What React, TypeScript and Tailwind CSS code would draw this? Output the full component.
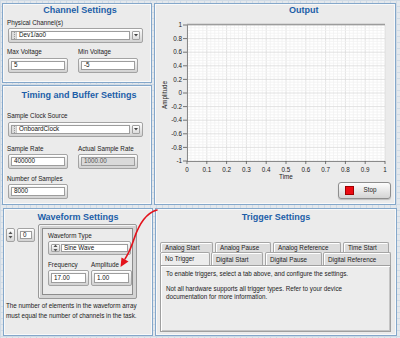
import React from 'react';

const frame =
  'rounded-[2px] border border-[#a3a3a3] bg-linear-to-b from-[#fbfbfb] to-[#d2d2d2] p-[2px] shadow-[inset_0_1px_0_#ffffff]';

const Panel: React.FC<{ className?: string; children?: React.ReactNode }> = ({ className = '', children }) => (
  <div className={`border border-[#84a7ca] bg-[#ebebeb] shadow-[inset_0_0_0_1px_#f9f9f9] ${className}`}>{children}</div>
);

const Title: React.FC<{ className?: string; children: React.ReactNode }> = ({ className = '', children }) => (
  <div className={`h-[13px] text-[9px] leading-[13px] font-bold whitespace-nowrap text-[#1c5ea8] ${className}`}>{children}</div>
);

const Label: React.FC<{ className?: string; children: React.ReactNode }> = ({ className = '', children }) => (
  <div className={`h-[8px] text-[6.3px] leading-[8px] whitespace-nowrap text-[#222] ${className}`}>{children}</div>
);

const NumBox: React.FC<{ value: string; className?: string; disabled?: boolean }> = ({ value, className = '', disabled }) => (
  <div className={`${frame} ${className}`}>
    <div
      className={`flex h-full items-center border border-[#9d9d9d] pl-[2px] text-[6.3px] leading-none ${
        disabled ? 'bg-[#d9d9d9] text-[#555]' : 'bg-white text-[#111]'
      }`}
    >
      {value}
    </div>
  </div>
);

const Incrementer: React.FC<{ className?: string }> = ({ className = '' }) => (
  <svg width="7" height="10" viewBox="0 0 7 10" className={className}>
    <polygon points="1.5,4 3.5,1.5 5.5,4" fill="#555" />
    <polygon points="1.5,6 3.5,8.5 5.5,6" fill="#555" />
  </svg>
);

const Combo: React.FC<{ value: string; className?: string }> = ({ value, className = '' }) => (
  <div className={`${frame} flex h-[15px] items-stretch gap-[2px] ${className}`}>
    <div className="flex flex-1 items-stretch border border-[#9d9d9d] bg-white">
      <div className="w-[5px] border-r border-[#c9c9c9] bg-[#dcdcdc] bg-[image:repeating-linear-gradient(to_bottom,#9a9a9a_0px,#9a9a9a_1px,transparent_1px,transparent_2px)] bg-size-[1px_100%] bg-center bg-no-repeat" />
      <div className="flex items-center pl-[2px] text-[6.3px] leading-none text-[#111]">{value}</div>
    </div>
    <div className="flex w-[8px] items-center justify-center rounded-[1px] border border-[#a0a0a0] bg-linear-to-b from-white to-[#dcdcdc]">
      <svg width="4" height="3" viewBox="0 0 4 3">
        <polygon points="0,0 4,0 2,2.5" fill="#444" />
      </svg>
    </div>
  </div>
);

const Chart: React.FC = () => {
  const X0 = 32;
  const Y0 = 7;
  const W = 198;
  const H = 136;
  const yLabels = ['1', '0.8', '0.6', '0.4', '0.2', '0', '-0.2', '-0.4', '-0.6', '-0.8', '-1'];
  const xLabels = ['0', '0.1', '0.2', '0.3', '0.4', '0.5', '0.6', '0.7', '0.8', '0.9', '1'];
  const minor = Array.from({ length: 51 }, (_, i) => i);
  return (
    <svg width="238" height="162" viewBox="0 0 238 162" className="mt-[1px] block">
      <rect x={X0} y={Y0} width={W} height={H} fill="#ffffff" />
      {minor.map((i) => (
        <line
          key={'vx' + i}
          x1={X0 + (i * W) / 50}
          x2={X0 + (i * W) / 50}
          y1={Y0}
          y2={Y0 + H}
          stroke={i % 5 === 0 ? '#dadada' : '#f1f1f1'}
          strokeWidth="0.8"
        />
      ))}
      {minor.map((i) => (
        <line
          key={'hy' + i}
          x1={X0}
          x2={X0 + W}
          y1={Y0 + (i * H) / 50}
          y2={Y0 + (i * H) / 50}
          stroke={i % 5 === 0 ? '#dadada' : '#f1f1f1'}
          strokeWidth="0.8"
        />
      ))}
      <line x1={X0} x2={X0 + W} y1={Y0 - 0.5} y2={Y0 - 0.5} stroke="#9c9c9c" strokeWidth="1.6" />
      <line x1={X0 + 0.5} x2={X0 + 0.5} y1={Y0} y2={Y0 + H} stroke="#8a8a8a" strokeWidth="1" />
      <line x1={X0} x2={X0 + W} y1={Y0 + H + 0.5} y2={Y0 + H + 0.5} stroke="#8a8a8a" strokeWidth="1" />
      {yLabels.map((t, i) => {
        const y = Y0 + (i * H) / 10;
        return (
          <g key={'yl' + t}>
            <line x1={X0 - 4} x2={X0} y1={y} y2={y} stroke="#555" strokeWidth="0.8" />
            <text x={X0 - 5} y={y + 2.2} textAnchor="end" fontSize="6.3" fill="#222">
              {t}
            </text>
          </g>
        );
      })}
      {xLabels.map((t, i) => {
        const x = X0 + (i * W) / 10;
        return (
          <g key={'xl' + t}>
            <line x1={x} x2={x} y1={Y0 + H} y2={Y0 + H + 3} stroke="#555" strokeWidth="0.8" />
            <text x={x} y={Y0 + H + 11} textAnchor="middle" fontSize="6.3" fill="#222">
              {t}
            </text>
          </g>
        );
      })}
      <text x="131" y="161" textAnchor="middle" fontSize="6.3" fill="#222">
        Time
      </text>
      <text x="12" y="77" textAnchor="middle" fontSize="6.3" fill="#222" transform="rotate(-90 12 77)">
        Amplitude
      </text>
    </svg>
  );
};

const Tab: React.FC<{ label: string; w: string; selected?: boolean; className?: string }> = ({ label, w, selected, className = '' }) => (
  <div
    className={`${w} flex h-full items-start rounded-t-[2px] border border-b-0 border-[#a6a6a6] pt-[1px] pl-[4px] text-[6.3px] leading-[8px] whitespace-nowrap text-[#222] shadow-[inset_1px_1px_0_#ffffff] ${
      selected ? 'relative z-10 -mb-[1px] bg-[#ececec] pl-[3px]' : 'bg-[#dcdcdc]'
    } ${className}`}
  >
    {label}
  </div>
);

export default function App() {
  return (
    <div className="relative h-[338px] w-[400px] overflow-hidden bg-[#e4e8ec] bg-[image:linear-gradient(to_right,#cfdae5_1px,transparent_1px),linear-gradient(to_bottom,#cfdae5_1px,transparent_1px)] bg-size-[6px_6px] font-['Liberation_Sans',Arial,sans-serif]">
      <div className="flex gap-[2px] pt-[3px] pl-[2px]">
        <div className="flex w-[150px] flex-col gap-[2px]">
          {/* Channel Settings */}
          <Panel className="h-[80px]">
            <div className="flex flex-col pl-[4px]">
              <Title className="pl-[2px] text-center">Channel Settings</Title>
              <Label className="mt-[2px]">Physical Channel(s)</Label>
              <Combo value="Dev1/ao0" className="mt-[1px] ml-[1px] w-[135px]" />
              <div className="mt-[5px] flex">
                <div className="w-[71px]">
                  <Label>Max Voltage</Label>
                  <NumBox value="5" className="mt-[2px] ml-[1px] h-[15px] w-[60px]" />
                </div>
                <div>
                  <Label>Min Voltage</Label>
                  <NumBox value="-5" className="mt-[2px] h-[15px] w-[60px]" />
                </div>
              </div>
            </div>
          </Panel>
          {/* Timing and Buffer Settings */}
          <Panel className="h-[120px]">
            <div className="flex flex-col pl-[4px]">
              <Title className="mt-[3px] text-center">Timing and Buffer Settings</Title>
              <Label className="mt-[10px]">Sample Clock Source</Label>
              <Combo value="OnboardClock" className="mt-[2px] ml-[1px] w-[135px]" />
              <div className="mt-[8px] flex">
                <div className="w-[71px]">
                  <Label>Sample Rate</Label>
                  <NumBox value="400000" className="mt-[1px] ml-[1px] h-[15px] w-[60px]" />
                </div>
                <div>
                  <Label>Actual Sample Rate</Label>
                  <NumBox value="1000.00" disabled className="mt-[1px] h-[15px] w-[60px]" />
                </div>
              </div>
              <Label className="mt-[6px]">Number of Samples</Label>
              <NumBox value="8000" className="mt-[1px] ml-[1px] h-[15px] w-[60px]" />
            </div>
          </Panel>
        </div>
        {/* Output */}
        <Panel className="h-[202px] w-[242px]">
          <Title className="pl-[134px]">Output</Title>
          <Chart />
          <div className="mt-[2px] flex justify-end pr-[4px]">
            <div className="flex h-[17px] w-[53px] items-center rounded-[3px] border border-[#8e8e8e] bg-linear-to-b from-[#fdfdfd] to-[#d4d4d4] shadow-[0_1px_1px_rgba(0,0,0,0.2)]">
              <div className="ml-[6px] h-[9px] w-[9px] border border-[#a00000] bg-[#ec0a12]" />
              <div className="flex-1 pr-[4px] text-center text-[6.3px] leading-none text-[#222]">Stop</div>
            </div>
          </div>
        </Panel>
      </div>

      <div className="mt-[3px] flex gap-[2px] pl-[3px]">
        {/* Waveform Settings */}
        <Panel className="h-[128px] w-[150px]">
          <div className="flex flex-col">
            <Title className="mt-[2px] text-center">Waveform Settings</Title>
            <div className="flex items-start">
              <div className="mt-[4px] ml-[2px] flex h-[14px] w-[29px] gap-[2px]">
                <div className="flex w-[9px] items-center justify-center rounded-[2px] border border-[#a3a3a3] bg-linear-to-b from-white to-[#d6d6d6]">
                  <Incrementer />
                </div>
                <NumBox value="0" className="h-[14px] flex-1 p-[1px]" />
              </div>
              <div className="ml-[3px] h-[75px] w-[99px] rounded-[2px] border border-[#999] bg-[#d4d4d4] p-[3px] shadow-[inset_1px_1px_0_#f4f4f4]">
                <div className="h-full border border-[#8c8c8c] bg-[#ebebeb] pl-[5px]">
                  <Label className="mt-[3px]">Waveform Type</Label>
                  <div className={`${frame} mt-[1px] flex h-[14px] w-[83px] gap-[1px]`}>
                    <div className="flex w-[9px] items-center justify-center rounded-[1px] border border-[#a3a3a3] bg-linear-to-b from-white to-[#d6d6d6]">
                      <Incrementer />
                    </div>
                    <div className="flex flex-1 items-center border border-[#9d9d9d] bg-white pl-[2px] text-[6.3px] leading-none text-[#111]">
                      Sine Wave
                    </div>
                  </div>
                  <div className="mt-[6px] flex">
                    <div className="w-[44px]">
                      <Label>Frequency</Label>
                      <NumBox value="17.00" className="mt-[1px] h-[16px] w-[41px]" />
                    </div>
                    <div>
                      <Label>Amplitude</Label>
                      <NumBox value="1.00" className="mt-[1px] h-[16px] w-[41px]" />
                    </div>
                  </div>
                </div>
              </div>
            </div>
            <div className="mt-[2px] pl-[2px] text-[6.3px] leading-[10px] text-[#222]">
              <div>The number of elements in the waveform array</div>
              <div>must equal the number of channels in the task.</div>
            </div>
          </div>
        </Panel>
        {/* Trigger Settings */}
        <Panel className="h-[128px] w-[242px]">
          <Title className="mt-[2px] text-center">Trigger Settings</Title>
          <div className="mt-[18px] ml-[4px] flex flex-col">
            <div className="flex h-[10px]">
              <Tab label="Analog Start" w="w-[53px]" />
              <Tab label="Analog Pause" w="w-[56px]" className="ml-[2px]" />
              <Tab label="Analog Reference" w="w-[68px]" className="ml-[2px]" />
              <Tab label="Time Start" w="w-[46px]" className="ml-[2px]" />
            </div>
            <div className="flex h-[13px]">
              <Tab label="No Trigger" w="w-[50px]" selected className="pt-[2px]" />
              <Tab label="Digital Start" w="w-[52px]" className="ml-[1px] pt-[3px]" />
              <Tab label="Digital Pause" w="w-[57px]" className="ml-[2px] pt-[3px]" />
              <Tab label="Digital Reference" w="w-[68px]" className="ml-[1px] pt-[3px]" />
            </div>
            <div className="h-[67px] w-[231px] border border-[#9f9f9f] bg-[#ececec] pl-[5px] text-[6.3px] leading-[8px] text-[#222] shadow-[inset_1px_1px_0_#ffffff,inset_-1px_-1px_0_#c4c4c4]">
              <div className="mt-[4px]">To enable triggers, select a tab above, and configure the settings.</div>
              <div className="mt-[7px]">Not all hardware supports all trigger types. Refer to your device</div>
              <div>documentation for more information.</div>
            </div>
          </div>
        </Panel>
      </div>

      {/* red annotation arrow */}
      <svg width="400" height="338" viewBox="0 0 400 338" className="pointer-events-none absolute inset-0">
        <path d="M157 210 C146 213, 139 224, 134 239 S127 255, 125 259" fill="none" stroke="#e3121b" strokeWidth="1.6" strokeLinecap="round" />
        <polygon points="120.5,267 121.5,257.5 128.5,261.5" fill="#e3121b" />
      </svg>
    </div>
  );
}
